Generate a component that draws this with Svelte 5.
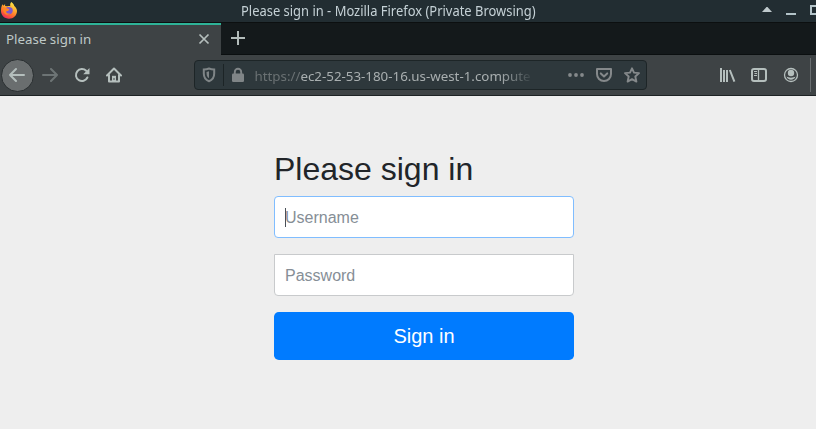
<script>
  let username = $state('');
  let password = $state('');
</script>

<div class="window">
  <header class="titlebar">
    <svg class="firefox" width="18" height="18" viewBox="0 0 18 18">
      <defs>
        <linearGradient id="flame" x1="0.8" y1="0" x2="0.3" y2="1">
          <stop offset="0" stop-color="#fff04a" />
          <stop offset="0.4" stop-color="#ffab2e" />
          <stop offset="0.72" stop-color="#ff642f" />
          <stop offset="1" stop-color="#ed2864" />
        </linearGradient>
      </defs>
      <path d="M11.2 1C13.2 2.3 14 3.6 14.3 4.9C15.8 6 17 7.9 17 10C17 14.5 13.5 17.7 9 17.7S1 14.3 1 10C1 7.5 1.2 5.3 2.6 3.2L3.5 4.7L5.1 3V5L7.4 5.2C8.6 4.9 9.5 4.8 10.3 5.2C9.9 3.7 10.3 2.3 11.2 1Z" fill="url(#flame)" />
      <path d="M5.5 7.2C7.5 5.1 12.8 5.4 12.8 9.3C12.8 12 11.2 13.2 9.1 13.2C6.6 13.2 5.3 11.7 5.5 9.9L8.3 9.6L9 8.1L6.8 7.8Z" fill="#7d58cc" />
      <path d="M2.1 5.2L6.4 7.3L9 8L8.3 9.7L6 10.5C6.3 12.4 8.3 13 10 12.2C8 15 4 13.5 3.4 10Z" fill="#ff8426" />
    </svg>
    <div class="caption">Please sign in - Mozilla Firefox (Private Browsing)</div>
    <svg class="controls" width="56" height="22" viewBox="0 0 56 22">
      <path d="M2 12L6.5 7H7.5L12 12Z" fill="#bfc9cc" />
      <path d="M26 13H36V15H26Z" fill="#b3c3c8" />
      <path d="M51 6H61V14H51Z" fill="none" stroke="#b3c3c8" stroke-width="2" />
    </svg>
  </header>

  <nav class="tabs">
    <div class="tab">
      <span class="tabname">Please sign in</span>
      <svg class="close" width="12" height="12" viewBox="0 0 12 12"><path d="M1.5 1.5L10.5 10.5M10.5 1.5L1.5 10.5" stroke="#b5bfbd" stroke-width="1.7" /></svg>
    </div>
    <svg class="plus" width="16" height="16" viewBox="0 0 16 16"><path d="M8 1V15M1 8H15" stroke="#b3bcba" stroke-width="2" /></svg>
  </nav>

  <div class="toolbar">
    <div class="back">
      <svg width="18" height="16" viewBox="0 0 18 16"><path d="M16 8H2M8 2L2 8L8 14" class="line" /></svg>
    </div>
    <svg class="forward" width="18" height="16" viewBox="0 0 18 16"><path d="M1 8H15M9 2L15 8L9 14" class="line" /></svg>
    <svg class="reload" width="16" height="16" viewBox="0 0 16 16">
      <path d="M13.4 10.5A6 6 0 1 1 12.2 3.8" class="line" />
      <path d="M15.5 1V7.2H9.2Z" fill="#b5bfbd" />
    </svg>
    <svg class="home" width="16" height="16" viewBox="0 0 16 16">
      <path d="M1 8.5L8 1.5L15 8.5M3 8V14.4H13V8" class="line" />
      <path d="M6 14.5V8.8H10V14.5Z" fill="#b5bfbd" />
      <path d="M7.5 11H8.5V13H7.5Z" fill="#454b4c" />
    </svg>

    <div class="address">
      <svg class="shield" width="14" height="16" viewBox="0 0 14 16">
        <path d="M7 1.5C9 2.2 10.5 2.4 12.2 2.5V6.5C12.2 10.8 10.3 13 7 14.2C3.7 13 1.8 10.8 1.8 6.5V2.5C3.5 2.4 5 2.2 7 1.5Z" fill="none" stroke="#7f8587" stroke-width="2" />
        <path d="M7 4.3V11.3C5 10.1 4.5 8.5 4.5 5Z" fill="#7f8587" />
      </svg>
      <i></i>
      <svg class="lock" width="12" height="16" viewBox="0 0 12 16">
        <path d="M2.8 8V5A3.2 3.2 0 0 1 9.2 5V8" fill="none" stroke="#808587" stroke-width="1.9" />
        <rect y="6.5" width="12" height="8.5" rx="1.2" fill="#808587" />
      </svg>
      <div class="url"><span>https://</span>ec2-52-53-180-16.us-west-1.compute</div>
      <svg class="dots" width="16" height="16" viewBox="0 0 16 16" fill="#85898b"><circle cx="2" cy="8" r="1.9" /><circle cx="8" cy="8" r="1.9" /><circle cx="14" cy="8" r="1.9" /></svg>
      <svg class="pocket" width="16" height="16" viewBox="0 0 16 16" fill="none" stroke="#85898b" stroke-width="2" stroke-linecap="round" stroke-linejoin="round">
        <path d="M1 2H15V7C15 11 12 14 8 14S1 11 1 7Z" /><path d="M4.8 6.4L8 9.4L11.2 6.4" />
      </svg>
      <svg class="star" width="16" height="16" viewBox="0 0 16 16"><path d="M8 1.3L10 5.6L15 6.1L11.3 9.5L12.4 14.6L8 12.1L3.6 14.6L4.7 9.5L1 6.1L6 5.6Z" fill="none" stroke="#85898b" stroke-width="1.9" stroke-linejoin="round" /></svg>
    </div>

    <svg class="library" width="16" height="16" viewBox="0 0 16 16"><path d="M1 1V15M4 3V15M7 3V15M9.8 3L14.4 14.7" fill="none" stroke="#b5bfbd" stroke-width="2" /></svg>
    <svg class="sidebar" width="16" height="16" viewBox="0 0 16 16"><rect x="1" y="2" width="14" height="12" rx="2" fill="none" stroke="#b5bfbd" stroke-width="2" /><path d="M7.5 2V14" stroke="#b5bfbd" stroke-width="1.3" /><path d="M3 4.5H6M3.5 6.5H6M3 8.5H6" stroke="#b5bfbd" /></svg>
    <svg class="account" width="16" height="16" viewBox="0 0 16 16"><circle cx="8" cy="8" r="6.5" fill="none" stroke="#b5bfbd" stroke-width="1.3" /><circle cx="8" cy="6" r="3.2" fill="#b5bfbd" /><path d="M3.6 9.6C5.2 11 10.8 11 12.4 9.6C11.7 13.8 4.3 13.8 3.6 9.6Z" fill="#b5bfbd" /></svg>
    <i class="end"></i>
  </div>

  <main>
    <form onsubmit={(e) => e.preventDefault()}>
      <h2>Please sign in</h2>
      <div class="field">
        <input class="user" type="text" placeholder="Username" aria-label="Username" bind:value={username} />
        <b class="caret"></b>
      </div>
      <input class="pass" type="password" placeholder="Password" aria-label="Password" bind:value={password} />
      <button type="submit">Sign in</button>
    </form>
  </main>
</div>

<style>
  .window { width: 816px; height: 429px; overflow: hidden; background: #eee; display: flex; flex-direction: column; font-family: "Noto Sans", sans-serif; }
  .window *, .window { box-sizing: border-box; }
  svg { display: block; flex: none; }
  .titlebar { height: 22px; flex: none; background: #222d32; display: flex; align-items: center; color: #c5d1d6; }
  .firefox { margin-top: -2px; }
  .caption { width: 320px; margin-left: 223px; font-size: 14px; line-height: 22px; white-space: nowrap; transform: scaleX(.924); transform-origin: left center; }
  .controls { margin-left: auto; }
  .tabs { height: 33px; flex: none; background: #14191b; border-top: 1px solid #0c0f10; display: flex; box-shadow: inset 0 -1px #0b0f10; }
  .tab { width: 221px; height: 32px; border-top: 2px solid #2eb398; background: #3e4345; display: flex; align-items: center; justify-content: space-between; padding: 0 11px 0 6px; }
  .tabname { font-size: 13.33px; line-height: 18px; color: #bfc9c7; white-space: nowrap; margin-top: -2px; }
  .close { margin-top: -2px; }
  .plus { margin: 7px 0 0 9px; }
  .toolbar { height: 41px; flex: none; background: #3e4345; border-bottom: 1px solid #1d2224; display: flex; align-items: center; }
  .line { fill: none; stroke: #b5bfbd; stroke-width: 2; stroke-linecap: round; stroke-linejoin: round; }
  .back { width: 33px; height: 33px; margin-left: 1px; border: 1px solid #292e30; border-radius: 50%; background: #6a6e6f; display: flex; align-items: center; justify-content: center; flex: none; }
  .back svg { margin-left: -2px; }
  .forward { margin-left: 8px; opacity: .4; }
  .reload { margin-left: 14px; }
  .home { margin-left: 16px; }
  .address { width: 453px; height: 30px; margin-left: 72px; border: 1px solid #1d2527; border-radius: 4px; background: #2e383c; display: flex; align-items: center; flex: none; }
  .shield { margin-left: 7px; }
  .address i { width: 1px; height: 22px; background: #1c2426; margin-left: 7px; }
  .lock { margin-left: 8px; }
  .url { width: 277px; margin: 2px 0 0 10.5px; white-space: nowrap; font-size: 13.33px; line-height: 20px; color: #a9afb0; mask-image: linear-gradient(to right, #000 245px, transparent 279px); }
  .url span { color: #6a7173; }
  .dots { margin-left: 36.5px; }
  .pocket, .star { margin-left: 12px; }
  .library { margin-left: 73px; }
  .sidebar { margin-left: 15px; }
  .account { margin-left: 16px; }
  .end { width: 1px; height: 34px; margin-left: 11px; background: #696e70; }
  main { flex: 1; display: flex; }
  form { width: 300px; margin-left: 274px; padding-top: 54px; font-family: "Liberation Sans", Arial, sans-serif; }
  h2 { margin: 0 0 8px; font-size: 32px; font-weight: 500; line-height: 38.4px; color: #212529; }
  .field { position: relative; margin-bottom: 16px; }
  input { display: block; width: 300px; height: 42px; padding: 12px 10px 10px; border: 1px solid #c8cacc; background: #fff; font: 16px "Liberation Sans", Arial, sans-serif; color: #495057; outline: none; }
  input::placeholder { color: #868e96; opacity: 1; }
  .user { border-color: #80bdff; border-radius: 4px; }
  .pass { border-radius: 0 0 4px 4px; }
  .caret { position: absolute; left: 11px; top: 12px; width: 1px; height: 19px; background: #495057; }
  button { display: block; width: 300px; height: 48px; margin-top: 16px; padding: 0; border: 0; border-radius: 4.8px; background: #007bff; color: #fff; font: 20px "Liberation Sans", Arial, sans-serif; }
</style>
